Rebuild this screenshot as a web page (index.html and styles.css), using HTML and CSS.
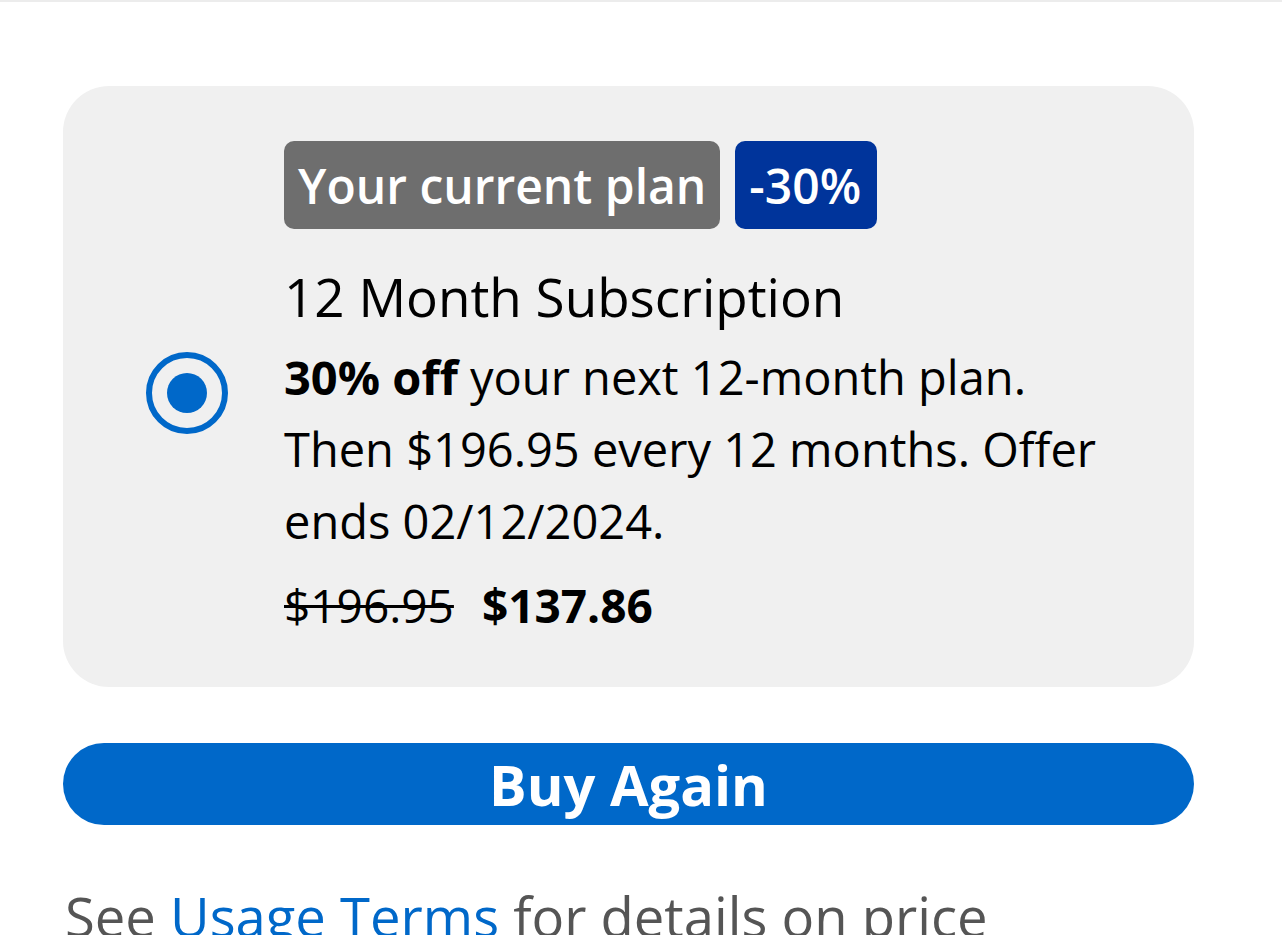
FILE: index.html
```html
<!DOCTYPE html>
<html lang="en">
<head>
<meta charset="utf-8">
<title>Subscription</title>
<link rel="stylesheet" href="styles.css">
</head>
<body>
<div class="topline"></div>
<main class="page">
  <section class="card">
    <div class="radio"><span class="radio-dot"></span></div>
    <div class="plan">
      <div class="badges">
        <span class="badge badge-current">Your current plan</span>
        <span class="badge badge-discount">-30%</span>
      </div>
      <h2 class="plan-title">12 Month Subscription</h2>
      <p class="plan-desc"><strong>30% off</strong> your next 12-month plan. Then $196.95 every 12 months. Offer ends 02/12/2024.</p>
      <div class="prices">
        <span class="price-old">$196.95</span>
        <span class="price-new">$137.86</span>
      </div>
    </div>
  </section>
  <button class="buy">Buy Again</button>
  <p class="terms">See <a href="#" class="link">Usage Terms</a> for details on price</p>
</main>
</body>
</html>
```

FILE: styles.css
```css
html, body {
  margin: 0;
  padding: 0;
  background: #ffffff;
  height: 935px;
  overflow: hidden;
}
body {
  font-family: "Open Sans", "Noto Sans", sans-serif;
  color: #000;
}
.topline {
  height: 2px;
  background: #ececec;
}
.page {
  padding: 84px 88px 0 63px;
}
.card {
  background: #f0f0f0;
  border-radius: 46px;
  display: flex;
  align-items: center;
  gap: 56px;
  padding: 55px 40px 52px 83px;
}
.radio {
  flex: none;
  width: 82px;
  height: 82px;
  box-sizing: border-box;
  border: 6px solid #0068c9;
  border-radius: 50%;
  display: flex;
  align-items: center;
  justify-content: center;
  margin-top: 10px;
}
.radio-dot {
  width: 40px;
  height: 40px;
  border-radius: 50%;
  background: #0068c9;
}
.plan {
  flex: 1;
  max-width: 826px;
}
.badges {
  display: flex;
  gap: 15px;
}
.badge {
  display: inline-flex;
  align-items: center;
  height: 88px;
  padding: 0 14px;
  border-radius: 10px;
  color: #fff;
  font-weight: 600;
  font-size: 48px;
  box-sizing: border-box;
}
.badge-current {
  background: #6e6e6e;
}
.badge-discount {
  background: #00349b;
  padding: 0 16px 0 14px;
}
.plan-title {
  margin: 34px 0 0;
  font-size: 53px;
  font-weight: 400;
  line-height: 68px;
}
.plan-desc {
  margin: 10px 0 0;
  font-size: 47px;
  line-height: 72px;
}
.plan-desc strong {
  font-weight: 700;
}
.prices {
  margin-top: 18px;
  display: flex;
  gap: 28px;
  font-size: 46px;
  line-height: 60px;
}
.price-old {
  text-decoration: line-through;
  text-decoration-thickness: 3px;
}
.price-new {
  font-weight: 700;
}
.buy {
  display: block;
  width: 100%;
  margin-top: 56px;
  height: 82px;
  border: none;
  border-radius: 41px;
  background: #0068c9;
  color: #fff;
  font-family: inherit;
  font-size: 56px;
  font-weight: 700;
  line-height: 82px;
  padding: 0;
}
.terms {
  margin: 61px 0 0 2px;
  font-size: 54.4px;
  color: #555;
  line-height: 60px;
  white-space: nowrap;
}
.link {
  color: #0068c9;
  text-decoration: none;
}
```
